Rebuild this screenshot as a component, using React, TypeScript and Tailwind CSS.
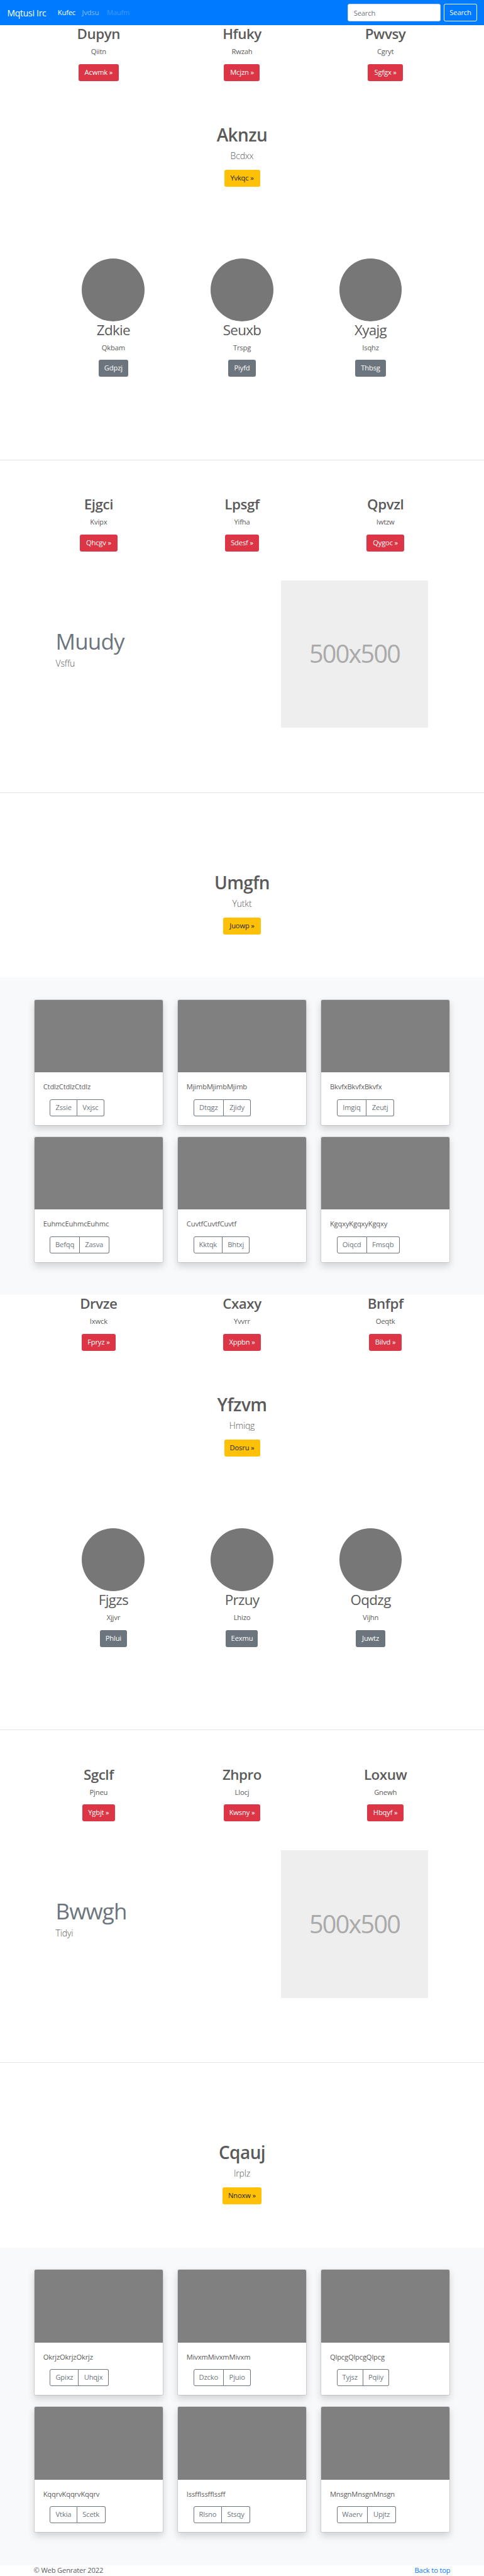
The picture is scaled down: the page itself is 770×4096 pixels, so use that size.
import React from "react";

type Item = { title: string; text: string; button: string; width: string };
type CardItem = { text: string; first: string; firstWidth: string; second: string; secondWidth: string };
type PageBlock = {
  top: Item[];
  hero: Item;
  people: Item[];
  features: Item[];
  article: { title: string; text: string };
  closing: Item;
  cards: CardItem[];
};

const blocks: PageBlock[] = [
  {
    top: [
      { title: "Dupyn", text: "Qiitn", button: "Acwmk »", width: "w-[64.3px]" },
      { title: "Hfuky", text: "Rwzah", button: "Mcjzn »", width: "w-[57px]" },
      { title: "Pwvsy", text: "Cgryt", button: "Sgfgx »", width: "w-[55.5px]" },
    ],
    hero: { title: "Aknzu", text: "Bcdxx", button: "Yvkqc »", width: "w-[57px]" },
    people: [
      { title: "Zdkie", text: "Qkbam", button: "Gdpzj", width: "w-[47.6px]" },
      { title: "Seuxb", text: "Trspg", button: "Piyfd", width: "w-[44.2px]" },
      { title: "Xyajg", text: "Isqhz", button: "Thbsg", width: "w-[49.1px]" },
    ],
    features: [
      { title: "Ejgci", text: "Kvipx", button: "Qhcgv »", width: "w-[59.9px]" },
      { title: "Lpsgf", text: "Yifha", button: "Sdesf »", width: "w-[54px]" },
      { title: "Qpvzl", text: "Iwtzw", button: "Qygoc »", width: "w-[59.9px]" },
    ],
    article: { title: "Muudy", text: "Vsffu" },
    closing: { title: "Umgfn", text: "Yutkt", button: "Juowp »", width: "w-[59.9px]" },
    cards: [
      { text: "CtdlzCtdlzCtdlz", first: "Zssie", firstWidth: "w-[43.5px]", second: "Vxjsc", secondWidth: "w-[43px]" },
      { text: "MjimbMjimbMjimb", first: "Dtqgz", firstWidth: "w-[48.6px]", second: "Zjidy", secondWidth: "w-[42.8px]" },
      { text: "BkvfxBkvfxBkvfx", first: "Imgiq", firstWidth: "w-[47.6px]", second: "Zeutj", secondWidth: "w-[43.7px]" },
      { text: "EuhmcEuhmcEuhmc", first: "Befqq", firstWidth: "w-[47.4px]", second: "Zasva", secondWidth: "w-[46.9px]" },
      { text: "CuvtfCuvtfCuvtf", first: "Kktqk", firstWidth: "w-[46.6px]", second: "Bhtxj", secondWidth: "w-[43.2px]" },
      { text: "KgqxyKgqxyKgqxy", first: "Oiqcd", firstWidth: "w-[48.1px]", second: "Fmsqb", secondWidth: "w-[52px]" },
    ],
  },
  {
    top: [
      { title: "Drvze", text: "Ixwck", button: "Fpryz »", width: "w-[54.5px]" },
      { title: "Cxaxy", text: "Yvvrr", button: "Xppbn »", width: "w-[60.9px]" },
      { title: "Bnfpf", text: "Oeqtk", button: "Bilvd »", width: "w-[51.5px]" },
    ],
    hero: { title: "Yfzvm", text: "Hmiqg", button: "Dosru »", width: "w-[57px]" },
    people: [
      { title: "Fjgzs", text: "Xjjvr", button: "Phlui", width: "w-[43.7px]" },
      { title: "Przuy", text: "Lhizo", button: "Eexmu", width: "w-[51px]" },
      { title: "Oqdzg", text: "Vijhn", button: "Juwtz", width: "w-[46.6px]" },
    ],
    features: [
      { title: "Sgclf", text: "Pjneu", button: "Ygbjt »", width: "w-[52.5px]" },
      { title: "Zhpro", text: "Llocj", button: "Kwsny »", width: "w-[58.9px]" },
      { title: "Loxuw", text: "Gnewh", button: "Hbqyf »", width: "w-[58.5px]" },
    ],
    article: { title: "Bwwgh", text: "Tidyi" },
    closing: { title: "Cqauj", text: "Irplz", button: "Nnoxw »", width: "w-[62.9px]" },
    cards: [
      { text: "OkrjzOkrjzOkrjz", first: "Gpixz", firstWidth: "w-[46.1px]", second: "Uhqjx", secondWidth: "w-[47.1px]" },
      { text: "MivxmMivxmMivxm", first: "Dzcko", firstWidth: "w-[48.6px]", second: "Pjuio", secondWidth: "w-[43.2px]" },
      { text: "QlpcgQlpcgQlpcg", first: "Tyjsz", firstWidth: "w-[42px]", second: "Pqiiy", secondWidth: "w-[41.5px]" },
      { text: "KqqrvKqqrvKqqrv", first: "Vtkia", firstWidth: "w-[43.2px]", second: "Scetk", secondWidth: "w-[45.2px]" },
      { text: "IssffIssffIssff", first: "Rlsno", firstWidth: "w-[45.9px]", second: "Stsqy", secondWidth: "w-[44.4px]" },
      { text: "MnsgnMnsgnMnsgn", first: "Waerv", firstWidth: "w-[49.6px]", second: "Upjtz", secondWidth: "w-[44.7px]" },
    ],
  },
];

function Button({ label, width, tone }: { label: string; width: string; tone: string }) {
  return (
    <a
      href="#"
      className={`flex h-[27.1px] items-center justify-center rounded-[3px] whitespace-nowrap ${width} ${tone}`}
    >
      {label}
    </a>
  );
}

function Column({ item, tone, weight }: { item: Item; tone: string; weight: string }) {
  return (
    <div className="flex flex-col items-center">
      <h2 className={`mb-[5.7px] h-[27.4px] text-[22.4px] leading-[28.2px] ${weight}`}>{item.title}</h2>
      <p className="mb-[11.4px] h-[17.1px] leading-[17.1px]">{item.text}</p>
      <Button label={item.button} width={item.width} tone={tone} />
    </div>
  );
}

function TripleRow({ items }: { items: Item[] }) {
  return (
    <div className="mx-auto grid w-[684.4px] grid-cols-3">
      {items.map((item) => (
        <Column key={item.title} item={item} tone="bg-[#dc3545] text-white" weight="font-semibold tracking-[-0.02em]" />
      ))}
    </div>
  );
}

function Hero({ item }: { item: Item }) {
  return (
    <div className="flex flex-col items-center">
      <h1 className="mb-[5.7px] h-[34.2px] text-[28px] leading-[35.2px] font-semibold tracking-[-0.02em]">{item.title}</h1>
      <p className="mb-[11.4px] h-[21.4px] text-[14px] leading-[21.4px] font-light">{item.text}</p>
      <Button label={item.button} width={item.width} tone="bg-[#ffc107] text-[#212529]" />
    </div>
  );
}

function Card({ card }: { card: CardItem }) {
  return (
    <div className="h-[201px] overflow-hidden rounded-[3px] border border-black/10 bg-white bg-clip-padding shadow-[0_5.7px_11.4px_rgba(0,0,0,0.15)]">
      <div className="h-[115.6px] bg-[#808080]" />
      <div className="p-[14.2px]">
        <p className="mb-[11.4px] h-[17.1px] leading-[17.1px] tracking-[-0.015em]">{card.text}</p>
        <div className="ml-[10.7px] flex h-[27.1px] text-[#6c757d]">
          <button className={`rounded-l-[3px] border border-[#6c757d] ${card.firstWidth}`}>{card.first}</button>
          <button className={`rounded-r-[3px] border border-l-0 border-[#6c757d] ${card.secondWidth}`}>{card.second}</button>
        </div>
      </div>
    </div>
  );
}

function Block({ block }: { block: PageBlock }) {
  return (
    <section className="h-[2019.4px]">
      <TripleRow items={block.top} />
      <div className="mt-[68.4px]">
        <Hero item={block.hero} />
      </div>
      <div className="mx-auto mt-[114.1px] grid w-[613.8px] grid-cols-3">
        {block.people.map((item) => (
          <div key={item.title} className="flex flex-col items-center">
            <div className="size-[99.8px] rounded-full bg-[#777]" />
            <Column item={item} tone="bg-[#6c757d] text-white" weight="font-normal tracking-[-0.03em]" />
          </div>
        ))}
      </div>
      <hr className="mt-[131.2px] mb-[56.8px] border-black/10" />
      <TripleRow items={block.features} />
      <div className="mt-[45.6px] flex h-[234.6px] items-center justify-between px-[88.6px]">
        <div className="pb-[15.6px]">
          <h2 className="mb-[2.6px] text-[35px] leading-[42.8px] tracking-[-0.025em] text-[#6c757d]">{block.article.title}</h2>
          <p className="text-[14px] leading-[21.4px] font-light">{block.article.text}</p>
        </div>
        <div className="flex size-[234.6px] items-center justify-center bg-[#eee] text-[39.5px] tracking-[-1.7px] text-[#aaa]">
          500x500
        </div>
      </div>
      <hr className="mt-[102.7px] mb-[125.2px] border-black/10" />
      <Hero item={block.closing} />
      <div className="mt-[68.6px] grid h-[504.8px] grid-cols-3 content-start gap-x-[21.4px] gap-y-[17.1px] bg-[#f8f9fa] px-[53.5px] pt-[34.2px]">
        {block.cards.map((card) => (
          <Card key={card.text} card={card} />
        ))}
      </div>
    </section>
  );
}

export default function App() {
  return (
    <div className="h-[4096px] overflow-hidden bg-white font-['Open_Sans','Noto_Sans',sans-serif] text-[11.2px] tracking-[-0.015em] text-[#5a5a5a]">
      <nav className="flex h-[40px] items-center bg-[#007bff] px-[11.4px] text-white">
        <a href="#" className="w-[80.4px] text-[14px] leading-[21px] tracking-[-0.02em]">Mqtusi Irc</a>
        <a href="#" className="w-[38.8px]">Kufec</a>
        <a href="#" className="w-[39.3px] text-white/50">Jvdsu</a>
        <a href="#" className="text-white/25">Maufm</a>
        <input
          type="text"
          placeholder="Search"
          className="ml-auto h-[27.1px] w-[147.5px] rounded-[3px] border border-[#ced4da] bg-white px-[8.5px] placeholder:text-[#6c757d]"
        />
        <button className="ml-[5.7px] h-[27.1px] w-[52.2px] rounded-[3px] border border-[#f8f9fa] text-[#f8f9fa]">Search</button>
      </nav>
      {blocks.map((block) => (
        <Block key={block.hero.title} block={block} />
      ))}
      <footer className="flex h-[17.1px] items-center justify-between px-[53.5px]">
        <p>© Web Genrater 2022</p>
        <a href="#" className="text-[#007bff]">Back to top</a>
      </footer>
    </div>
  );
}
